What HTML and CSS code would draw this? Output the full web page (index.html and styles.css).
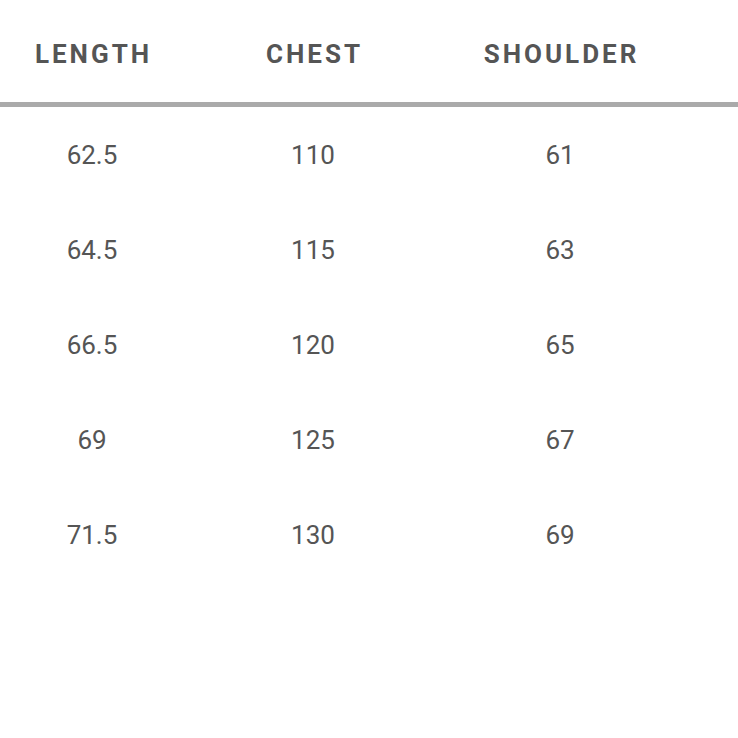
FILE: index.html
```html
<!DOCTYPE html>
<html>
<head>
<meta charset="utf-8">
<link rel="stylesheet" href="styles.css">
</head>
<body>
<div class="table">
  <div class="row head">
    <div class="cell">LENGTH</div>
    <div class="cell">CHEST</div>
    <div class="cell">SHOULDER</div>
  </div>
  <div class="row"><div class="cell">62.5</div><div class="cell">110</div><div class="cell">61</div></div>
  <div class="row"><div class="cell">64.5</div><div class="cell">115</div><div class="cell">63</div></div>
  <div class="row"><div class="cell">66.5</div><div class="cell">120</div><div class="cell">65</div></div>
  <div class="row"><div class="cell">69</div><div class="cell">125</div><div class="cell">67</div></div>
  <div class="row"><div class="cell">71.5</div><div class="cell">130</div><div class="cell">69</div></div>
</div>
</body>
</html>
```
FILE: styles.css
```css
html, body {
  margin: 0;
  padding: 0;
  background: #fff;
}
.table {
  width: 738px;
  font-family: Roboto, "Noto Sans", sans-serif;
  color: #555;
}
.row {
  display: grid;
  grid-template-columns: 184px 258px 236px 1fr;
  height: 95px;
  align-items: center;
  font-size: 26px;
}
.cell {
  text-align: center;
}
.head {
  height: 102px;
  box-sizing: content-box;
  border-bottom: 5px solid #aaa;
  font-weight: bold;
  font-size: 26px;
  letter-spacing: 3px;
}
.head .cell {
  padding-top: 6px;
  padding-left: 3px;
}
```
